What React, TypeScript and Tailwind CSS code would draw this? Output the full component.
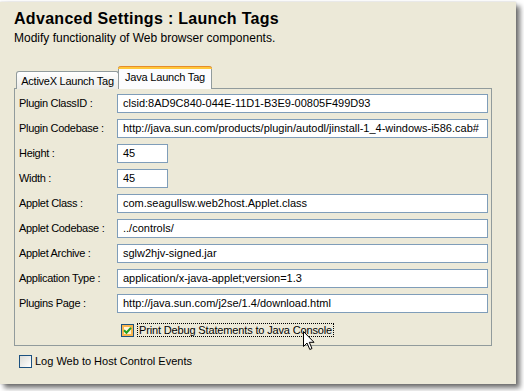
import type { ReactNode } from 'react';

const rows = [
  { label: 'Plugin ClassID :', value: 'clsid:8AD9C840-044E-11D1-B3E9-00805F499D93' },
  { label: 'Plugin Codebase :', value: 'http://java.sun.com/products/plugin/autodl/jinstall-1_4-windows-i586.cab#' },
  { label: 'Height :', value: '45', small: true },
  { label: 'Width :', value: '45', small: true },
  { label: 'Applet Class :', value: 'com.seagullsw.web2host.Applet.class' },
  { label: 'Applet Codebase :', value: '../controls/' },
  { label: 'Applet Archive :', value: 'sglw2hjv-signed.jar' },
  { label: 'Application Type :', value: 'application/x-java-applet;version=1.3' },
  { label: 'Plugins Page :', value: 'http://java.sun.com/j2se/1.4/download.html' },
];

function CheckBox({ checked = false, hover = false }: { checked?: boolean; hover?: boolean }) {
  return (
    <div className="w-[13px] h-[13px] shrink-0 border border-[#1C5180] bg-gradient-to-br from-[#DCDCD7] to-white">
      <div className={`w-full h-full flex items-center justify-center ${hover ? 'border-2 border-[#F9B54E] bg-[#FFF4D8]' : ''}`}>
        {checked && (
          <svg width="9" height="9" viewBox="0 0 9 9" className="shrink-0">
            <path d="M1 4.2 L3.5 6.7 L8 1.8" fill="none" stroke="#21A121" strokeWidth="2" />
          </svg>
        )}
      </div>
    </div>
  );
}

function Row({ label, children }: { label: string; children: ReactNode }) {
  return (
    <div className="flex items-center h-[19px]">
      <div className="w-[98px] shrink-0 tracking-[-0.3px]">{label}</div>
      {children}
    </div>
  );
}

export default function App() {
  return (
    <div className="w-[524px] h-[391px] bg-white relative overflow-hidden font-['Liberation_Sans',Arial,sans-serif] text-black">
      <div className="mt-[2px] w-[516px] h-[382px] bg-[#ECE9D8] shadow-[0_0_2px_rgba(0,0,0,0.2),4px_4px_5px_rgba(0,0,0,0.55)] pl-[14px] pt-[7px]">
        {/* Header */}
        <h1 className="text-[16px] leading-[20px] font-bold tracking-[0.3px]">Advanced Settings : Launch Tags</h1>
        <p className="text-[12px] leading-[14px] mt-[2px]">Modify functionality of Web browser components.</p>

        {/* Tabs */}
        <div className="mt-[21px] flex items-end h-[23px] pl-[2px] text-[11px] relative z-10">
          <div className="h-[18px] w-[103px] border border-b-0 border-[#919B9C] rounded-t-[3px] bg-gradient-to-b from-white to-[#ECEBE6] flex items-center justify-center pt-[1px] tracking-[-0.25px]">
            ActiveX Launch Tag
          </div>
          <div className="h-[23px] w-[94px] -ml-px border-x border-[#919B9C] rounded-t-[3px] bg-[#FCFCFE] flex flex-col tracking-[-0.2px]">
            <div className="h-[3px] rounded-t-[3px] bg-[#FFC83C] border-t border-[#E68B2C] -mx-px" />
            <div className="flex-1 flex items-center justify-center pb-[3px]">Java Launch Tag</div>
          </div>
        </div>

        {/* Panel */}
        <div className="-mt-px w-[478px] border border-[#919B9C] pl-[4px] pr-[3px] pt-[5px] pb-[8px] text-[11px] flex flex-col gap-[6px]">
          {rows.map((r) => (
            <Row key={r.label} label={r.label}>
              <div
                className={`h-[19px] border border-[#7F9DB9] bg-white pl-[5px] flex items-center whitespace-nowrap overflow-hidden ${
                  r.small ? 'w-[51px]' : 'flex-1'
                }`}
              >
                {r.value}
              </div>
            </Row>
          ))}
          <div className="flex items-center mt-[4px] pl-[102px] relative">
            <CheckBox checked hover />
            <span className="ml-[3px] px-px border border-dotted border-black leading-[12px] tracking-[-0.15px]">
              Print Debug Statements to Java Console
            </span>
            {/* mouse pointer */}
            <svg width="12" height="20" viewBox="0 0 12 20" className="absolute left-[284px] top-[8px]">
              <path d="M0.5 0.5 V15.5 L4 12 L6.8 18.5 L9 17.5 L6.3 11.3 H11 Z" fill="white" stroke="black" strokeWidth="1" />
            </svg>
          </div>
        </div>

        {/* Bottom checkbox */}
        <div className="flex items-center mt-[7px] ml-[5px] text-[11px]">
          <CheckBox />
          <span className="ml-[3px]">Log Web to Host Control Events</span>
        </div>
      </div>
    </div>
  );
}
